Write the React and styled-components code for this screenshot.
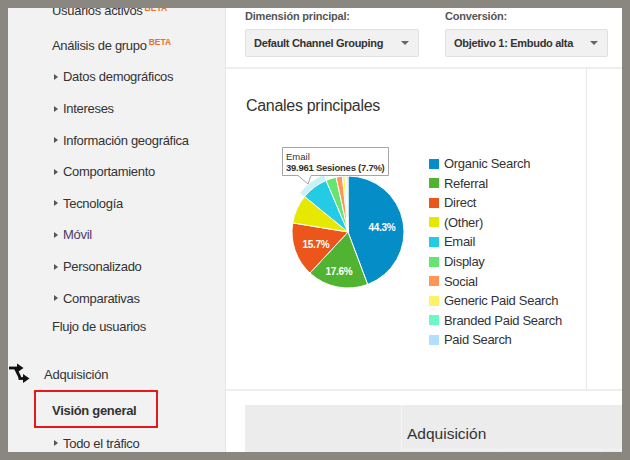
import React from "react"
import styled, { createGlobalStyle } from "styled-components"

const GlobalStyle = createGlobalStyle`
  html, body {
    margin: 0;
    padding: 0;
    background: #8a8680;
  }
  * {
    box-sizing: border-box;
  }
`

const FONT = `"Liberation Sans", Arial, Helvetica, sans-serif`

const navItems = [
  { label: "Usuarios activos", beta: true, first: true },
  { label: "Análisis de grupo", beta: true },
  { label: "Datos demográficos", arrow: true },
  { label: "Intereses", arrow: true },
  { label: "Información geográfica", arrow: true },
  { label: "Comportamiento", arrow: true },
  { label: "Tecnología", arrow: true },
  { label: "Móvil", arrow: true, visited: true },
  { label: "Personalizado", arrow: true },
  { label: "Comparativas", arrow: true },
]

const slices = [
  { name: "Organic Search", value: 44.3, color: "#058dc7", label: "44.3%" },
  { name: "Referral", value: 17.6, color: "#50b432", label: "17.6%" },
  { name: "Direct", value: 15.7, color: "#ed561b", label: "15.7%" },
  { name: "(Other)", value: 8.3, color: "#e6e800" },
  { name: "Email", value: 7.7, color: "#24cbe5", hover: true },
  { name: "Display", value: 3.0, color: "#64e572" },
  { name: "Social", value: 1.8, color: "#ff9655" },
  { name: "Generic Paid Search", value: 0.8, color: "#fff263" },
  { name: "Branded Paid Search", value: 0.4, color: "#6af9c4" },
  { name: "Paid Search", value: 0.4, color: "#b2deff" },
]

const CX = 78
const CY = 92
const R = 56

const pt = (r, a) => {
  const rad = (a * Math.PI) / 180
  return [CX + r * Math.sin(rad), CY - r * Math.cos(rad)]
}

const sector = (a0, a1) => {
  const [x0, y0] = pt(R, a0)
  const [x1, y1] = pt(R, a1)
  const large = a1 - a0 > 180 ? 1 : 0
  return `M${CX},${CY} L${x0},${y0} A${R},${R} 0 ${large} 1 ${x1},${y1} Z`
}

const halo = (a0, a1, r0, r1) => {
  const [x0, y0] = pt(r1, a0)
  const [x1, y1] = pt(r1, a1)
  const [x2, y2] = pt(r0, a1)
  const [x3, y3] = pt(r0, a0)
  return `M${x0},${y0} A${r1},${r1} 0 0 1 ${x1},${y1} L${x2},${y2} A${r0},${r0} 0 0 0 ${x3},${y3} Z`
}

const labelPos = {
  "44.3%": [112, 91],
  "17.6%": [69, 135],
  "15.7%": [46, 108],
}

const PieChart = () => {
  let acc = 0
  const parts = slices.map((s) => {
    const a0 = (acc / 100) * 360
    acc += s.value
    const a1 = (acc / 100) * 360
    return { ...s, a0, a1 }
  })
  const email = parts.find((p) => p.hover)
  return (
    <PieSvg width="150" height="160" viewBox="0 0 150 160">
      <path d={halo(email.a0, email.a1, R, R + 6)} fill="#24cbe5" opacity="0.25" />
      {parts.map((p) => (
        <path key={p.name} d={sector(p.a0, p.a1)} fill={p.color} stroke="#fff" strokeWidth="1" />
      ))}
      {parts
        .filter((p) => p.label)
        .map((p) => (
          <text
            key={p.label}
            x={labelPos[p.label][0]}
            y={labelPos[p.label][1]}
            textAnchor="middle"
            fill="#fff"
            fontFamily={FONT}
            fontWeight="bold"
            fontSize="10"
            letterSpacing="-0.3"
          >
            {p.label}
          </text>
        ))}
      <path
        d="M12.5,7.5 H118.5 V35.5 H41 L38,44 L28,35.5 H12.5 Z"
        fill="#fff"
        fillOpacity="0.92"
        stroke="#a5a5a5"
        strokeWidth="1"
      />
      <text x="16" y="20" fontFamily={FONT} fontSize="9.5" fill="#333">
        Email
      </text>
      <text x="16" y="31" fontFamily={FONT} fontSize="9.5" fontWeight="bold" fill="#333" letterSpacing="-0.25">
        39.961 Sesiones (7.7%)
      </text>
    </PieSvg>
  )
}

// two merging arrows, as in the GA "Adquisición" section
const AcquisitionIcon = () => (
  <svg width="22" height="22" viewBox="0 0 22 22">
    <path d="M0 5 H9" stroke="#111" strokeWidth="2.8" />
    <path d="M8 0.5 L14.5 5 L8 9.5 Z" fill="#111" />
    <path d="M6.5 5.5 L11 14.5" stroke="#111" strokeWidth="2.8" />
    <path d="M9.5 15.5 H15" stroke="#111" strokeWidth="2.8" />
    <path d="M14 11 L20.5 15.5 L14 20 Z" fill="#111" />
  </svg>
)

const App = () => {
  return (
    <>
      <GlobalStyle />
      <Frame>
        <Window>
          <Sidebar>
            <NavList>
              {navItems.map((item) => (
                <NavRow key={item.label} $arrow={item.arrow} $first={item.first}>
                  {item.arrow && <Caret />}
                  <NavText $visited={item.visited}>{item.label}</NavText>
                  {item.beta && <Beta>BETA</Beta>}
                </NavRow>
              ))}
              <NavRow $short>
                <NavText>Flujo de usuarios</NavText>
              </NavRow>
              <SectionRow>
                <AcquisitionIcon />
                <SectionText>Adquisición</SectionText>
              </SectionRow>
              <ActiveItem>Visión general</ActiveItem>
              <NavRow $arrow>
                <Caret />
                <NavText>Todo el tráfico</NavText>
              </NavRow>
            </NavList>
          </Sidebar>

          <Main>
            <TopBar>
              <Filter>
                <FilterLabel>Dimensión principal:</FilterLabel>
                <Select $width={174}>
                  <span>Default Channel Grouping</span>
                  <SelectArrow />
                </Select>
              </Filter>
              <Filter>
                <FilterLabel>Conversión:</FilterLabel>
                <Select $width={163}>
                  <span>Objetivo 1: Embudo alta</span>
                  <SelectArrow />
                </Select>
              </Filter>
            </TopBar>

            <ChartRow>
              <ChartCard>
                <ChartTitle>Canales principales</ChartTitle>
                <ChartBody>
                  <PieChart />
                  <Legend>
                    {slices.map((s) => (
                      <LegendItem key={s.name}>
                        <Swatch $color={s.color} />
                        {s.name}
                      </LegendItem>
                    ))}
                  </Legend>
                </ChartBody>
              </ChartCard>
              <ChartSide />
            </ChartRow>

            <Table>
              <TableHead>
                <HeadCell $width={157} />
                <HeadGroup>
                  <GroupTitle>Adquisición</GroupTitle>
                  <SubRow>
                    <SubCell $width={101} />
                    <SubCell $width={98} />
                    <SubCell />
                  </SubRow>
                </HeadGroup>
              </TableHead>
            </Table>
          </Main>
        </Window>
      </Frame>
    </>
  )
}

const Frame = styled.div`
  width: 630px;
  height: 460px;
  padding: 8px;
  background: #8a8680;
`

const Window = styled.div`
  display: flex;
  height: 444px;
  overflow: hidden;
  background: #fff;
  font-family: ${FONT};
  color: #333;
`

const Sidebar = styled.div`
  width: 218px;
  flex: none;
  background: #f2f2f2;
  border-right: 1px solid #e6e6e6;
  overflow: hidden;
`

const NavList = styled.div`
  margin-top: -10px;
  display: flex;
  flex-direction: column;
`

const NavRow = styled.div`
  display: flex;
  flex: none;
  align-items: center;
  height: ${(p) => (p.$short ? "26px" : "31.6px")};
  margin-top: ${(p) => (p.$first ? "-2px" : "0")};
  padding-bottom: ${(p) => (p.$first ? "0" : "0")};
  padding-left: ${(p) => (p.$arrow ? "46px" : "44px")};
  font-size: 13px;
  letter-spacing: -0.3px;
  white-space: nowrap;
  ${(p) => p.$first && "height: 33.6px; padding-bottom: 4px;"}
`

const Caret = styled.span`
  width: 0;
  height: 0;
  border-left: 4px solid #555;
  border-top: 3.5px solid transparent;
  border-bottom: 3.5px solid transparent;
  margin-right: 5px;
`

const NavText = styled.span`
  color: ${(p) => (p.$visited ? "#4a3b68" : "#333")};
`

const Beta = styled.span`
  align-self: flex-start;
  margin-top: 7px;
  margin-left: 2px;
  font-size: 8.5px;
  font-weight: bold;
  letter-spacing: 0;
  color: #e8712b;
`

const SectionRow = styled.div`
  display: flex;
  flex: none;
  align-items: center;
  height: 31.2px;
  margin-top: 18.4px;
  padding-left: 1px;
  font-size: 13px;
  letter-spacing: -0.2px;
`

const SectionText = styled.span`
  margin-left: 13px;
  margin-top: 2px;
`

const ActiveItem = styled.div`
  flex: none;
  width: 124px;
  height: 38px;
  margin-left: 26px;
  padding: 3px 0 0 16px;
  display: flex;
  align-items: center;
  border: 2px solid #e8181a;
  font-size: 13px;
  font-weight: bold;
  letter-spacing: -0.3px;
  color: #333;
`

const Main = styled.div`
  flex: 1;
  display: flex;
  flex-direction: column;
  min-width: 0;
`

const TopBar = styled.div`
  display: flex;
  flex: none;
  gap: 26px;
  height: 61px;
  padding: 1px 0 0 19px;
  border-bottom: 2px solid #eee;
`

const Filter = styled.div`
  display: flex;
  flex-direction: column;
  gap: 6px;
`

const FilterLabel = styled.div`
  height: 14px;
  line-height: 14px;
  font-size: 11px;
  font-weight: bold;
  letter-spacing: -0.2px;
  color: #555;
`

const Select = styled.div`
  width: ${(p) => p.$width}px;
  height: 28px;
  display: flex;
  align-items: center;
  justify-content: space-between;
  padding: 0 9px 0 8px;
  background: #f1f1f1;
  border: 1px solid #e0e0e0;
  border-radius: 2px;
  font-size: 11px;
  font-weight: bold;
  letter-spacing: -0.3px;
  color: #333;
`

const SelectArrow = styled.span`
  width: 0;
  height: 0;
  border-top: 4px solid #666;
  border-left: 4px solid transparent;
  border-right: 4px solid transparent;
`

const ChartRow = styled.div`
  display: flex;
  flex: none;
  height: 322px;
  border-bottom: 2px solid #eee;
`

const ChartCard = styled.div`
  width: 361px;
  padding: 27px 0 0 20px;
  border-right: 1px solid #e8e8e8;
`

const ChartSide = styled.div`
  flex: 1;
`

const ChartTitle = styled.div`
  height: 20px;
  line-height: 20px;
  font-size: 16px;
  letter-spacing: -0.3px;
  color: #333;
`

const ChartBody = styled.div`
  display: flex;
  margin-top: 24px;
  margin-left: 24px;
`

const PieSvg = styled.svg`
  flex: none;
  display: block;
`

const Legend = styled.ul`
  list-style: none;
  margin: 14px 0 0 9px;
  padding: 0;
`

const LegendItem = styled.li`
  display: flex;
  align-items: center;
  height: 19.56px;
  font-size: 13px;
  letter-spacing: -0.3px;
  color: #333;
  white-space: nowrap;
`

const Swatch = styled.span`
  width: 10px;
  height: 10px;
  margin-right: 5px;
  background: ${(p) => p.$color};
`

const Table = styled.div`
  flex: none;
  margin: 14px 0 0 19px;
`

const TableHead = styled.div`
  display: flex;
  height: 60px;
  background: #ececec;
`

const HeadCell = styled.div`
  width: ${(p) => p.$width}px;
  border-right: 1px solid #f4f4f4;
`

const HeadGroup = styled.div`
  flex: 1;
  display: flex;
  flex-direction: column;
`

const GroupTitle = styled.div`
  height: 44px;
  padding: 20px 0 0 5px;
  line-height: 18px;
  font-size: 15.5px;
  color: #333;
`

const SubRow = styled.div`
  flex: 1;
  display: flex;
  border-top: 1px solid #f4f4f4;
`

const SubCell = styled.div`
  width: ${(p) => (p.$width ? `${p.$width}px` : "auto")};
  flex: ${(p) => (p.$width ? "none" : 1)};
  border-right: 1px solid #f4f4f4;
`

export default App
